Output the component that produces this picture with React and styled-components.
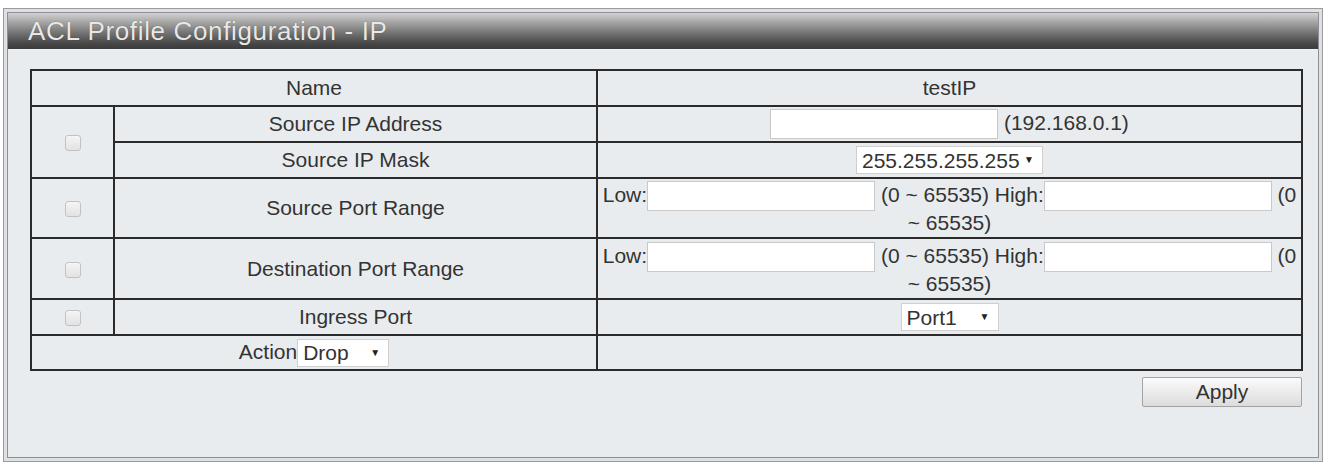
import styled, { createGlobalStyle } from "styled-components";

const GlobalStyle = createGlobalStyle`
  html, body {
    margin: 0;
    padding: 0;
    background: #ffffff;
  }
  body {
    font-family: "Liberation Sans", Arial, sans-serif;
  }
`;

function Select({ value, width }) {
	return (
		<SelectWrap>
			<SelectBox $w={width} defaultValue={value}>
				<option>{value}</option>
			</SelectBox>
		</SelectWrap>
	);
}

function PortRange() {
	return (
		<>
			Low:<TextInput type="text" /> (0 ~ 65535) High:
			<TextInput type="text" /> (0 ~ 65535)
		</>
	);
}

export default function App() {
	return (
		<Page>
			<GlobalStyle />
			<Panel>
				<Inner>
					<TitleBar>ACL Profile Configuration - IP</TitleBar>
					<Content>
						<Table>
							<colgroup>
								<col style={{ width: 83 }} />
								<col style={{ width: 483 }} />
								<col style={{ width: 705 }} />
							</colgroup>
							<tbody>
								<tr>
									<Cell colSpan={2} $h={36}>
										Name
									</Cell>
									<Cell $h={36}>testIP</Cell>
								</tr>
								<tr>
									<Cell rowSpan={2}>
										<Check type="checkbox" disabled />
									</Cell>
									<Cell $h={36}>Source IP Address</Cell>
									<Cell>
										<TextInput type="text" /> (192.168.0.1)
									</Cell>
								</tr>
								<tr>
									<Cell $h={36}>Source IP Mask</Cell>
									<Cell>
										<Select value="255.255.255.255" width={187} />
									</Cell>
								</tr>
								<tr>
									<Cell>
										<Check type="checkbox" disabled />
									</Cell>
									<Cell $h={60}>Source Port Range</Cell>
									<WrapCell>
										<PortRange />
									</WrapCell>
								</tr>
								<tr>
									<Cell>
										<Check type="checkbox" disabled />
									</Cell>
									<Cell $h={61}>Destination Port Range</Cell>
									<WrapCell>
										<PortRange />
									</WrapCell>
								</tr>
								<tr>
									<Cell>
										<Check type="checkbox" disabled />
									</Cell>
									<Cell $h={36}>Ingress Port</Cell>
									<Cell>
										<Select value="Port1" width={98} />
									</Cell>
								</tr>
								<tr>
									<Cell colSpan={2} $h={35}>
										Action
										<Select value="Drop" width={92} />
									</Cell>
									<Cell />
								</tr>
							</tbody>
						</Table>
						<ButtonRow>
							<ApplyButton type="button">Apply</ApplyButton>
						</ButtonRow>
					</Content>
				</Inner>
			</Panel>
		</Page>
	);
}

const Page = styled.div`
	padding: 8px 3px 3px 3px;
	font-family: "Liberation Sans", Arial, sans-serif;
	color: #333;
`;

const Panel = styled.div`
	height: 454px;
	box-sizing: border-box;
	border: 1px solid #9a9a9a;
	padding: 3px;
	background: #dde1e5;
	display: flex;
`;

const Inner = styled.div`
	flex: 1;
	display: flex;
	flex-direction: column;
	border: 1px solid #8e9094;
	background: #e9ecef;
`;

const TitleBar = styled.div`
	height: 37px;
	box-sizing: border-box;
	padding-left: 20px;
	display: flex;
	align-items: center;
	font-size: 26px;
	letter-spacing: 0.65px;
	color: #e8e8e8;
	text-shadow: 0 0 1px rgba(0, 0, 0, 0.45);
	background: linear-gradient(
		to bottom,
		#d2d2d2 0%,
		#acacac 22%,
		#747474 55%,
		#474747 85%,
		#3b3b3b 100%
	);
	border-bottom: 1px solid #f4f4f4;
`;

const Content = styled.div`
	flex: 1;
	padding: 19px 0 0 22px;
`;

const Table = styled.table`
	width: 1271px;
	table-layout: fixed;
	border-collapse: collapse;
	font-size: 21px;
	color: #333;
`;

const Cell = styled.td`
	height: ${(p) => (p.$h ? `${p.$h - 2}px` : "auto")};
	border: 2px solid #2b2b2b;
	padding: 0;
	text-align: center;
	vertical-align: middle;
	line-height: 24px;
`;

const WrapCell = styled(Cell)`
	padding: 0 1px;
`;

const Check = styled.input`
	appearance: none;
	width: 16px;
	height: 16px;
	margin: 0;
	vertical-align: middle;
	border: 1px solid #c2c2c2;
	border-radius: 3px;
	background: linear-gradient(#f5f5f5, #e2e2e2);
`;

const TextInput = styled.input`
	width: 228px;
	height: 30px;
	box-sizing: border-box;
	margin: 0;
	border: 1px solid #c9c9c9;
	background: #fff;
	vertical-align: middle;
	font: inherit;
`;

const SelectWrap = styled.span`
	position: relative;
	display: inline-block;
	vertical-align: middle;

	&::after {
		content: "▼";
		position: absolute;
		right: 9px;
		top: 50%;
		transform: translateY(-50%);
		font-size: 10px;
		color: #222;
		pointer-events: none;
	}
`;

const SelectBox = styled.select`
	appearance: none;
	width: ${(p) => p.$w}px;
	height: 28px;
	box-sizing: border-box;
	margin: 0;
	padding: 0 0 0 5px;
	border: 1px solid #cfcfcf;
	border-radius: 0;
	background: #fff;
	font-family: "Liberation Sans", Arial, sans-serif;
	font-size: 21px;
	color: #333;
	display: block;
`;

const ButtonRow = styled.div`
	width: 1272px;
	display: flex;
	justify-content: flex-end;
	margin-top: 6px;
`;

const ApplyButton = styled.button`
	width: 160px;
	height: 30px;
	border: 1px solid #a3a3a3;
	border-radius: 2px;
	background: linear-gradient(#fbfbfb, #dcdcdc);
	font-family: "Liberation Sans", Arial, sans-serif;
	font-size: 21px;
	color: #333;
	padding: 0;
`;
